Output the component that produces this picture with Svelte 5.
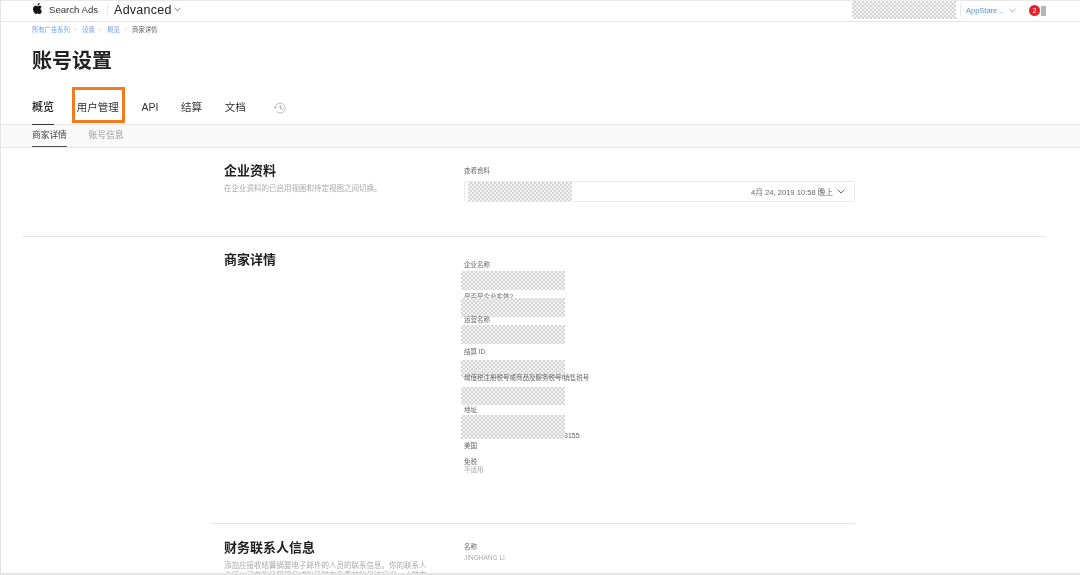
<script>
  // 面包屑和标签数据
  const crumbs = ['所有广告系列', '设置', '概览']
  const tabs = [
    { name: '概览', active: true },
    { name: '用户管理', marked: true },
    { name: 'API' },
    { name: '结算' },
    { name: '文档' }
  ]
  const subTabs = [
    { name: '商家详情', active: true },
    { name: '账号信息' }
  ]
</script>

<div class="page">
  <header class="topbar">
    <div class="brand">
      <svg class="apple" viewBox="0 0 24 24" width="11" height="11"><path fill="#111" d="M12.152 6.896c-.948 0-2.415-1.078-3.96-1.04-2.04.027-3.91 1.183-4.961 3.014-2.117 3.675-.546 9.103 1.519 12.09 1.013 1.454 2.208 3.09 3.792 3.039 1.52-.065 2.09-.987 3.935-.987 1.831 0 2.35.987 3.96.948 1.637-.026 2.676-1.48 3.676-2.948 1.156-1.688 1.636-3.325 1.662-3.415-.039-.013-3.182-1.221-3.22-4.857-.026-3.04 2.48-4.494 2.597-4.559-1.429-2.09-3.623-2.324-4.39-2.376-2-.156-3.675 1.09-4.61 1.09zM15.53 3.83c.843-1.012 1.4-2.427 1.245-3.83-1.207.052-2.662.805-3.532 1.818-.78.896-1.454 2.338-1.273 3.714 1.338.104 2.715-.688 3.559-1.701"/></svg>
      <span class="search-ads">Search Ads</span>
      <span class="advanced">Advanced</span>
      <svg viewBox="0 0 8 5" width="7" height="5"><path d="M.7.8 4 4l3.3-3.2" fill="none" stroke="#555" stroke-width=".9"/></svg>
    </div>
    <div class="account">
      <div class="mask account-mask"></div>
      <span class="org">AppStare ..</span>
      <svg viewBox="0 0 8 5" width="7" height="5"><path d="M.7.8 4 4l3.3-3.2" fill="none" stroke="#5b8fe0" stroke-width=".9"/></svg>
      <span class="badge">2</span>
      <span class="bell"></span>
    </div>
  </header>

  <nav class="crumbs">
    {#each crumbs as c}
      <span class="crumb-link">{c}</span>
      <svg viewBox="0 0 4 6" width="3" height="5"><path d="M.6.5 3 3 .6 5.5" fill="none" stroke="#aaa" stroke-width=".6"/></svg>
    {/each}
    <span>商家详情</span>
  </nav>

  <h1>账号设置</h1>

  <div class="tabs">
    {#each tabs as t}
      <div class="tab" class:active={t.active}>
        {t.name}
        {#if t.marked}<span class="highlight"></span>{/if}
      </div>
    {/each}
    <svg class="history" viewBox="0 0 14 14" width="14" height="14">
      <path d="M2.2 7a5 5 0 1 1 1.5 3.6" fill="none" stroke="#aaa" stroke-width=".8"/>
      <path d="M.6 5.6 2.2 7.4 3.9 5.6" fill="none" stroke="#aaa" stroke-width=".8"/>
      <path d="M7.2 4v3.3l2.2 1.2" fill="none" stroke="#888" stroke-width=".8"/>
    </svg>
  </div>

  <div class="subtabs">
    {#each subTabs as t}
      <div class="subtab" class:active={t.active}>{t.name}</div>
    {/each}
  </div>

  <section class="row first">
    <div class="intro">
      <h2>企业资料</h2>
      <p>在企业资料的已启用视图和待定视图之间切换。</p>
    </div>
    <div class="detail">
      <div class="label view-label">查看资料</div>
      <div class="select">
        <div class="mask select-mask"></div>
        <span>4月 24, 2019 10:58 晚上</span>
        <svg viewBox="0 0 8 5" width="8" height="5"><path d="M.7.8 4 4l3.3-3.2" fill="none" stroke="#555" stroke-width=".9"/></svg>
      </div>
    </div>
  </section>

  <hr class="wide" />

  <section class="row second">
    <div class="intro">
      <h2>商家详情</h2>
    </div>
    <div class="detail fields">
      <div class="field f1"><div class="label">企业名称</div><div class="mask"></div></div>
      <div class="field f2"><div class="label">是否是企业实体?</div><div class="mask"></div></div>
      <div class="field f3"><div class="label">运营名称</div><div class="mask"></div></div>
      <div class="field f4"><div class="label">结算 ID</div><div class="mask"></div></div>
      <div class="field f5"><div class="label">增值税注册税号或商品及服务税号/销售税号</div><div class="mask"></div></div>
      <div class="field f6">
        <div class="label">地址</div>
        <div class="mask"></div>
        <div class="zip">3155</div>
        <div class="label">美国</div>
      </div>
      <div class="field">
        <div class="label">免税</div>
        <div class="muted">不适用</div>
      </div>
    </div>
  </section>

  <hr class="narrow" />

  <section class="row third">
    <div class="intro">
      <h2>财务联系人信息</h2>
      <p>添加应接收结算摘要电子邮件的人员的联系信息。你的联系人必须公司有账号管理员或账号财务负责的账号访问权，才能查</p>
    </div>
    <div class="detail">
      <div class="label name-label">名称</div>
      <div class="muted name">JINGHANG LI</div>
    </div>
  </section>
</div>

<style>
  :global(body) {
    margin: 0;
    background: #fff;
  }
  .page {
    width: 1080px;
    height: 575px;
    box-sizing: border-box;
    overflow: hidden;
    border-left: 1px solid #e4e4e4;
    border-top: 1px solid #e8e8e8;
    border-bottom: 2px solid #e4e4e4;
    font-family: "Liberation Sans", "Noto Sans CJK SC", sans-serif;
    color: #333;
    filter: blur(.3px);
  }
  .topbar {
    height: 20px;
    display: flex;
    justify-content: space-between;
    border-bottom: 1px solid #e6e6e6;
    padding: 0 34px 0 31px;
  }
  .brand {
    display: flex;
    align-items: center;
    height: 17px;
  }
  .apple {
    margin-top: -3px;
  }
  .search-ads {
    font-size: 9.6px;
    color: #333;
    margin-left: 6px;
    padding-right: 9px;
    border-right: 1px solid #e8e8e8;
  }
  .advanced {
    font-size: 12.5px;
    color: #222;
    margin: 0 2px 0 6px;
    letter-spacing: .25px;
  }
  .account {
    display: flex;
    align-items: center;
    height: 19px;
  }
  .account-mask {
    width: 104px;
    height: 18px;
    margin-top: -1px;
    border-right: 4px solid #fff;
  }
  .org {
    font-size: 7.5px;
    color: #5b8fe0;
    border-left: 1px solid #e8e8e8;
    padding: 2px 0 2px 5px;
    margin-right: 5px;
    width: 38px;
  }
  .badge {
    width: 11px;
    height: 11px;
    border-radius: 50%;
    background: #e8202a;
    color: #fff;
    font-size: 7px;
    line-height: 11px;
    text-align: center;
    margin: 0 1px 0 13px;
  }
  .bell {
    width: 5px;
    height: 10px;
    background: #b5b5b5;
  }
  .crumbs {
    display: flex;
    align-items: center;
    gap: 4.7px;
    height: 9px;
    margin: 3px 0 0 31px;
    font-size: 6.3px;
    color: #555;
  }
  .crumb-link {
    color: #6fa3ea;
  }
  h1 {
    margin: 13px 0 0 31px;
    font-size: 20px;
    line-height: 28px;
    font-weight: 700;
    color: #222;
  }
  .tabs {
    display: flex;
    align-items: flex-start;
    gap: 22.7px;
    margin: 25px 0 0 31px;
    height: 30px;
    box-sizing: border-box;
  }
  .tab {
    position: relative;
    font-size: 10.5px;
    line-height: 14px;
    padding-bottom: 10px;
    height: 14px;
    color: #333;
  }
  .tab.active {
    font-size: 11px;
    color: #222;
    font-weight: 500;
    border-bottom: 1px solid #333;
    height: 25px;
    box-sizing: border-box;
  }
  .highlight {
    position: absolute;
    left: -5px;
    right: -6px;
    top: -13px;
    height: 30px;
    border: 3px solid #f47a20;
  }
  .history {
    margin-left: 5px;
    margin-top: 1px;
  }
  .subtabs {
    display: flex;
    gap: 22px;
    height: 22px;
    padding-left: 31px;
    margin-top: -6px;
    background: #f9f9f9;
    border-top: 1px solid #e6e6e6;
    border-bottom: 1px solid #e6e6e6;
  }
  .subtab {
    font-size: 8.7px;
    line-height: 20px;
    color: #999;
    height: 22px;
    box-sizing: border-box;
  }
  .subtab.active {
    color: #444;
    border-bottom: 1px solid #555;
  }
  .row {
    display: grid;
    grid-template-columns: 240px 391px;
    padding-left: 223px;
  }
  .first {
    padding-top: 15px;
    height: 73px;
  }
  .second {
    padding-top: 15px;
    height: 286px;
    box-sizing: border-box;
  }
  .third {
    padding-top: 16px;
  }
  h2 {
    margin: 0;
    font-size: 13px;
    line-height: 16px;
    font-weight: 700;
    color: #222;
  }
  .intro p {
    margin: 5px 0 0;
    font-size: 7.5px;
    line-height: 10px;
    color: #aaa;
    width: 205px;
  }
  .label {
    font-size: 6.5px;
    line-height: 9px;
    color: #666;
  }
  .view-label {
    margin-top: 3px;
  }
  .name-label {
    margin-top: 2px;
  }
  .muted {
    font-size: 6.5px;
    line-height: 8px;
    color: #aaa;
  }
  .name {
    margin-top: 3px;
  }
  .mask {
    background-color: #e4e4e4;
    background-image: repeating-conic-gradient(#d6d6d6 0 25%, #f2f2f2 0 50%);
    background-size: 4px 4px;
  }
  .select {
    position: relative;
    display: flex;
    align-items: center;
    justify-content: flex-end;
    gap: 4px;
    height: 21px;
    box-sizing: border-box;
    margin-top: 6px;
    padding-right: 9px;
    border: 1px solid #e8e8e8;
    border-radius: 2px;
    font-size: 7.6px;
    color: #666;
  }
  .select-mask {
    position: absolute;
    left: 3px;
    top: 0;
    width: 104px;
    height: 19px;
  }
  .fields {
    margin-top: 8px;
  }
  .field {
    position: relative;
  }
  .field .mask {
    position: absolute;
    left: -3px;
    width: 104px;
  }
  .f1 { height: 32px; }
  .f1 .mask { top: 11px; height: 19px; }
  .f2 { height: 23px; }
  .f2 .mask { top: 6px; height: 19px; }
  .f3 { height: 32px; }
  .f3 .mask { top: 10px; height: 19px; }
  .f4 { height: 26px; }
  .f4 .mask { top: 13px; height: 18px; }
  .f5 { height: 32px; }
  .f5 .mask { top: 14px; height: 18px; }
  .f6 { height: 52px; }
  .f6 .mask { top: 10px; height: 24px; }
  .zip {
    margin: 17px 0 0 100px;
    font-size: 7px;
    line-height: 10px;
    color: #666;
  }
  hr {
    border: 0;
    height: 1px;
    margin: 0;
    background: #e4e4e4;
  }
  .wide {
    margin: 0 34px 0 21px;
  }
  .narrow {
    margin: 0 225px 0 211px;
  }
</style>
